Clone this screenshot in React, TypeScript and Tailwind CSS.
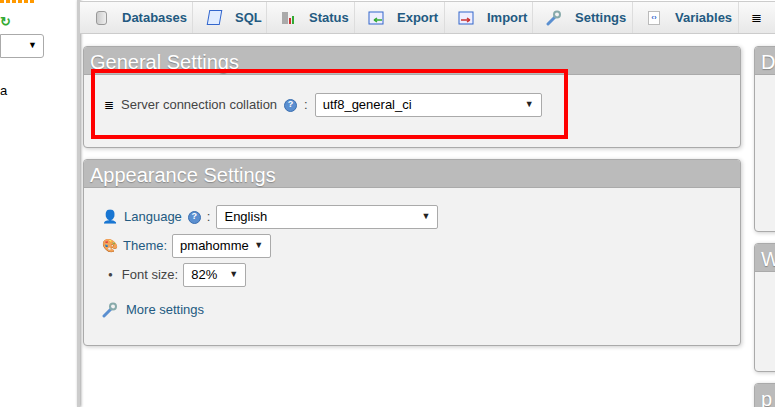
import React from "react";

const F = { fontFamily: '"Liberation Sans", Arial, sans-serif' };

function Tab({ icon, label, w }: { icon: React.ReactNode; label: string; w: string }) {
  return (
    <div className={`flex items-center gap-[13px] pl-[13px] border-r border-[#ddd] h-full ${w}`}>
      <div className="w-[16px] h-[16px] flex items-center justify-center">{icon}</div>
      <span className="text-[13px] font-bold text-[#235a81]">{label}</span>
    </div>
  );
}

const Help = () => (
  <span className="inline-flex w-[13px] h-[13px] rounded-full bg-[#5b8fd0] border border-[#3a6fb0] text-white text-[9px] font-bold items-center justify-center">?</span>
);

const Select = ({ v, w }: { v: string; w: string }) => (
  <div className={`flex items-center justify-between bg-white border border-[#aaa] rounded-[2px] h-[24px] px-[7px] ${w}`}>
    <span className="text-[13px] text-black">{v}</span>
    <span className="text-[9px] text-[#222]">▼</span>
  </div>
);

const Panel = ({ title, children, h }: { title: string; children?: React.ReactNode; h: string }) => (
  <div className={`border border-[#aaa] rounded-[4px] bg-[#f2f2f2] shadow-[1px_1px_4px_#ccc] overflow-hidden shrink-0 ${h}`}>
    <div className="h-[28px] bg-[#bbb] text-white text-[20px] pl-[6px] leading-[30px] [text-shadow:0_1px_1px_#888] border-b border-[#aaa] whitespace-nowrap">{title}</div>
    {children}
  </div>
);

const Wrench = () => (
  <svg width="16" height="16" viewBox="0 0 16 16"><path d="M2 14 L9 7" stroke="#5a8fd0" strokeWidth="3" strokeLinecap="round" /><circle cx="11" cy="4.5" r="3" fill="none" stroke="#8aa" strokeWidth="2" /></svg>
);

export default function App() {
  return (
    <div className="w-[775px] h-[407px] flex bg-white overflow-hidden" style={F}>
      <div className="w-[77px] h-full relative shrink-0">
        <div className="h-[3px] w-[36px] bg-[repeating-linear-gradient(90deg,#f90_0_4px,transparent_4px_6px)]" />
        <div className="mt-[12px] text-[#3a3] text-[13px] font-bold leading-none">↻</div>
        <div className="mt-[6px] w-[44px] h-[24px] border border-[#aaa] rounded-r-[3px] bg-white flex items-center justify-end pr-[6px] text-[9px]">▼</div>
        <div className="mt-[23px] text-[13px]">a</div>
      </div>
      <div className="w-[3px] h-full bg-[#ccc] shadow-[1px_0_3px_#999] shrink-0" />
      <div className="flex-1 flex flex-col min-w-0">
        <div className="h-[33px] shrink-0 mt-[1px] border-t border-b border-[#ccc] bg-gradient-to-b from-[#fafafa] to-[#e8e8e8] flex">
          <Tab w="w-[113px]" label="Databases" icon={<div className="w-[11px] h-[14px] rounded-[3px] bg-gradient-to-r from-[#ccc] to-[#eee] border border-[#999]" />} />
          <Tab w="w-[74px]" label="SQL" icon={<div className="w-[13px] h-[15px] border border-[#36c] bg-[#e0ecff] skew-x-[-10deg]" />} />
          <Tab w="w-[88px]" label="Status" icon={<svg width="16" height="16"><rect x="2" y="2" width="6" height="12" fill="#aaa" /><rect x="9" y="8" width="2" height="6" fill="#c33" /><rect x="12" y="6" width="2" height="8" fill="#3a3" /></svg>} />
          <Tab w="w-[90px]" label="Export" icon={<svg width="16" height="16"><rect x="1" y="2" width="14" height="12" fill="#eef" stroke="#36c" /><path d="M6 10h8M6 10l3-2M6 10l3 2" stroke="#3a3" strokeWidth="1.5" /></svg>} />
          <Tab w="w-[88px]" label="Import" icon={<svg width="16" height="16"><rect x="1" y="2" width="14" height="12" fill="#eef" stroke="#36c" /><path d="M3 10h9M12 10l-3-2M12 10l-3 2" stroke="#c33" strokeWidth="1.5" /></svg>} />
          <Tab w="w-[100px]" label="Settings" icon={<Wrench />} />
          <Tab w="w-[106px]" label="Variables" icon={<div className="w-[12px] h-[14px] bg-white border border-[#bbb] text-[#36c] text-[8px] font-bold flex items-center justify-center">‹›</div>} />
          <div className="flex items-center pl-[12px] text-[13px]">≣</div>
        </div>
        <div className="flex gap-[13px] pl-[3px] pt-[12px]">
          <div className="w-[658px] shrink-0 flex flex-col gap-[11px]">
            <Panel title="General Settings" h="h-[102px]">
              <div className="relative">
                <div className="absolute left-[7px] top-[-6px] w-[477px] h-[70px] border-[4px] border-[#f00]" />
                <div className="flex items-center pl-[20px] pt-[18px] gap-[7px] text-[13px] text-[#444]">
                  <span className="text-[12px] text-black">≣</span>
                  <span>Server connection collation</span>
                  <Help /><span>:</span>
                  <Select v="utf8_general_ci" w="w-[227px]" />
                </div>
              </div>
            </Panel>
            <Panel title="Appearance Settings" h="h-[187px]">
              <div className="pl-[18px] pt-[17px] flex flex-col gap-[5px] text-[13px] text-[#235a81]">
                <div className="flex items-center gap-[6px]">
                  <span className="text-[13px]">👤</span>
                  <span>Language</span><Help /><span className="text-[#444]">:</span>
                  <Select v="English" w="w-[222px]" />
                </div>
                <div className="flex items-center gap-[5px]">
                  <span className="text-[13px]">🎨</span>
                  <span>Theme:</span>
                  <Select v="pmahomme" w="w-[99px]" />
                </div>
                <div className="flex items-center gap-[5px] text-[#444] pl-[6px]">
                  <span className="text-[8px] mr-[4px]">●</span>
                  <span>Font size:</span>
                  <Select v="82%" w="w-[63px]" />
                </div>
                <div className="flex items-center gap-[8px] mt-[8px]">
                  <Wrench /><span>More settings</span>
                </div>
              </div>
            </Panel>
          </div>
          <div className="w-[40px] shrink-0 flex flex-col gap-[11px]">
            <Panel title="D" h="h-[186px]" />
            <Panel title="W" h="h-[129px]" />
            <Panel title="p" h="h-[60px]" />
          </div>
        </div>
      </div>
    </div>
  );
}
